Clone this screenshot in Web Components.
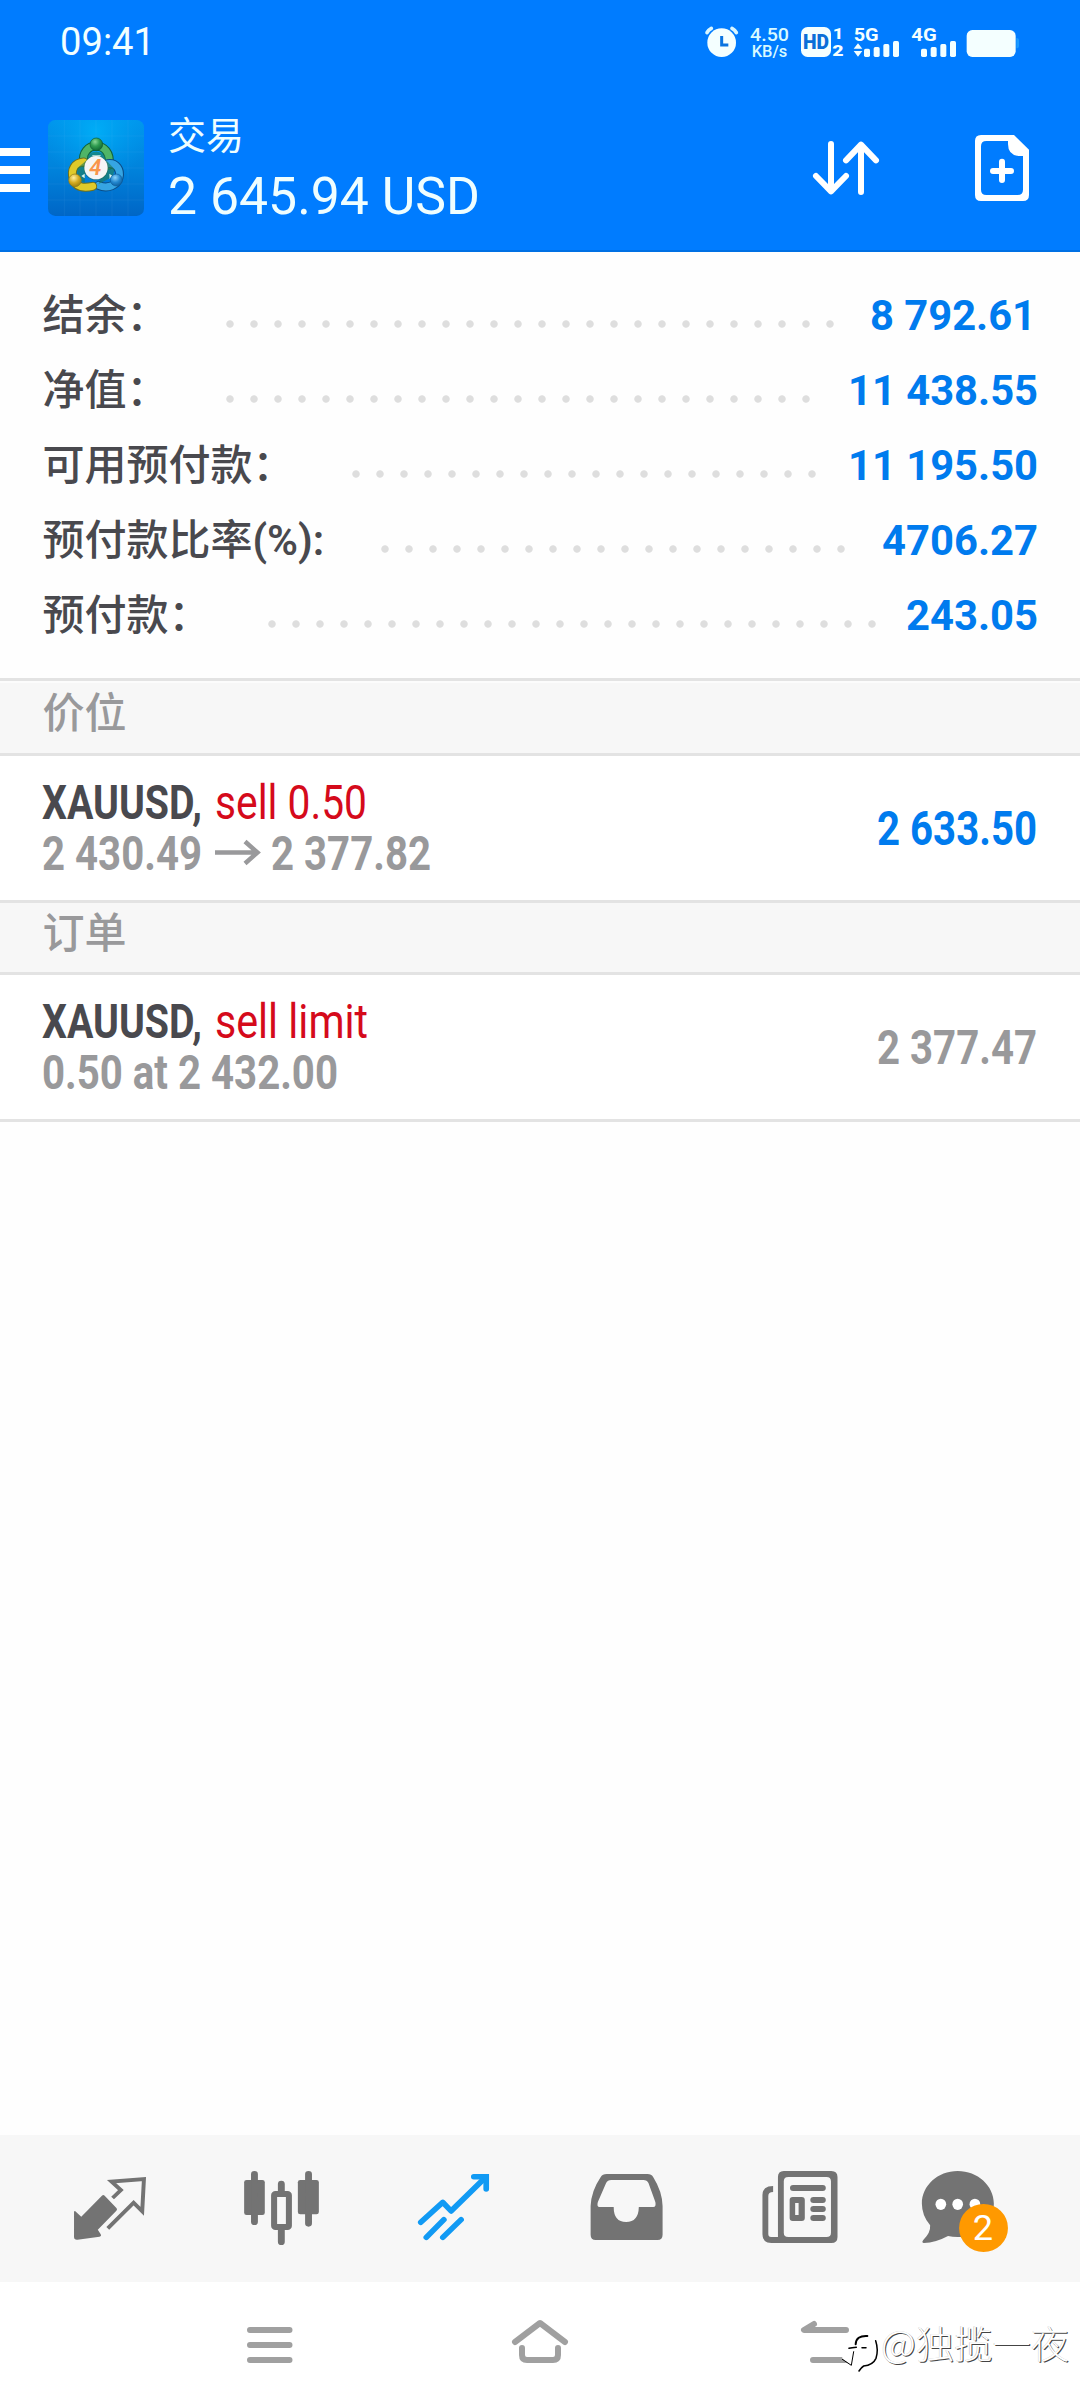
<!DOCTYPE html>
<html lang="zh-CN">
<head>
<meta charset="utf-8">
<title>交易</title>
<style>
html,body{margin:0;padding:0;background:#fefefe}
body{font-family:Roboto,"Noto Sans CJK SC",sans-serif;width:1080px}
</style>
</head>
<body>
<trade-app></trade-app>
<script>
// Text box of a known width: its glyph run is condensed or widened to fill it.
class FitText extends HTMLElement {
  constructor(){ super(); this.attachShadow({mode:'open'}).innerHTML =
    `<style>:host{display:block;flex:none;white-space:pre}span{display:inline-block;transform-origin:0 50%;white-space:pre}</style><span><slot></slot></span>`; }
  connectedCallback(){ this.fit(); document.fonts.ready.then(()=>this.fit()); }
  fit(){
    const w=+this.getAttribute('w'), s=this.shadowRoot.querySelector('span');
    this.style.width=w+'px';
    if(s.offsetWidth){ s.style.transform='none'; s.style.transform=`scaleX(${w/s.getBoundingClientRect().width})`; }
  }
}
const define=(name,html)=>customElements.define(name,class extends HTMLElement{
  constructor(){ super(); this.attachShadow({mode:'open'}).innerHTML=typeof html==='function'?html(this):html; }
});
customElements.define('fit-text',FitText);

define('status-bar',`<style>
:host{display:flex;height:88px;box-sizing:border-box;padding:20px 60px 0 60px;justify-content:space-between;color:#f2ffff}
.t{font-size:38.5px;line-height:44px}svg{display:block}
</style>
<fit-text class="t" w="95">09:41</fit-text>
<svg width="320" height="44" viewBox="120 60 960 132" fill="#f4ffff" font-family="Roboto">
<circle cx="185" cy="128" r="43"/><path d="M141 98q4-8 13-13M229 98q-4-8-13-13" fill="none" stroke="#d8f6ff" stroke-width="11" stroke-linecap="round"/>
<path d="M185 108v27h20" fill="none" stroke="#0a74e0" stroke-width="9"/>
<text x="270" y="123" font-size="54" font-weight="500" textLength="117" lengthAdjust="spacingAndGlyphs" fill="#d8faff">4.50</text>
<text x="275" y="171" font-size="47" font-weight="500" textLength="107" lengthAdjust="spacingAndGlyphs" fill="#d8faff">KB/s</text>
<rect x="423" y="81" width="90" height="90" rx="20"/>
<text x="429" y="147" font-size="58" font-weight="900" textLength="78" lengthAdjust="spacingAndGlyphs" fill="#0a6fd8">HD</text>
<text x="518" y="116" font-size="46" font-weight="800" textLength="32" lengthAdjust="spacingAndGlyphs">1</text>
<text x="517" y="168" font-size="46" font-weight="900" textLength="34" lengthAdjust="spacingAndGlyphs">2</text>
<text x="581" y="124" font-size="57" font-weight="700" textLength="75" lengthAdjust="spacingAndGlyphs">5G</text>
<path d="M581 146l13-16 13 16zM581 153l13 17 13-17z"/>
<rect x="612" y="146" width="18" height="25" rx="5"/><rect x="641" y="141" width="18" height="30" rx="5"/><rect x="670" y="132" width="18" height="39" rx="5"/><rect x="699" y="123" width="18" height="48" rx="5"/>
<text x="754" y="124" font-size="57" font-weight="700" textLength="76" lengthAdjust="spacingAndGlyphs">4G</text>
<rect x="783" y="146" width="18" height="25" rx="5"/><rect x="812" y="141" width="18" height="30" rx="5"/><rect x="841" y="132" width="18" height="39" rx="5"/><rect x="870" y="123" width="18" height="48" rx="5"/>
<rect x="920" y="90" width="147" height="81" rx="17"/><path d="M1069 114q8 0 8 7v17q0 7-8 7z" fill="#1a9aff"/>
</svg>`);

define('app-logo',`<style>:host{display:block;width:96px;height:96px;flex:none}svg{display:block}</style>
<svg width="96" height="96" viewBox="24 30 288 288">
<defs>
<linearGradient id="b" x1="0" y1="0" x2="0" y2="1"><stop offset="0" stop-color="#0096ec"/><stop offset=".5" stop-color="#0083dc"/><stop offset="1" stop-color="#0066c6"/></linearGradient>
<radialGradient id="h" cx=".5" cy=".12" r=".55"><stop offset="0" stop-color="#00b4fa" stop-opacity=".8"/><stop offset="1" stop-color="#00a0f0" stop-opacity="0"/></radialGradient>
<radialGradient id="g" cx=".4" cy=".3" r=".7"><stop offset="0" stop-color="#8ad896"/><stop offset=".5" stop-color="#2f9c50"/><stop offset="1" stop-color="#126a35"/></radialGradient>
<radialGradient id="y" cx=".4" cy=".3" r=".8"><stop offset="0" stop-color="#fff0a0"/><stop offset=".5" stop-color="#d3ab20"/><stop offset="1" stop-color="#8c7412"/></radialGradient>
<radialGradient id="u" cx=".4" cy=".3" r=".8"><stop offset="0" stop-color="#8bd2fa"/><stop offset=".5" stop-color="#2388d0"/><stop offset="1" stop-color="#0a5796"/></radialGradient>
</defs>
<rect x="24" y="30" width="288" height="288" rx="22" fill="url(#b)"/><rect x="24" y="30" width="288" height="288" rx="22" fill="url(#h)"/>
<path d="M73 30v288M120 30v288M168 30v288M216 30v288M264 30v288M24 78h288M24 126h288M24 174h288M24 222h288M24 270h288" stroke="#8fd8ff" stroke-opacity=".11" stroke-width="2" fill="none"/>
<g stroke-linecap="round" fill="none">
<path d="M131 158C126 128 145 108 168 108S213 128 207 165" stroke="#11633a" stroke-width="27"/><path d="M131 158C126 128 145 108 168 108S213 128 207 165" stroke="#4fb567" stroke-width="21"/>
<path d="M203 161C229 157 243 180 237 203S203 238 176 226" stroke="#0a4d88" stroke-width="27"/><path d="M203 161C229 157 243 180 237 203S203 238 176 226" stroke="#36a5e3" stroke-width="21"/>
<path d="M131 156C104 158 91 179 100 207S134 234 158 229" stroke="#6f701c" stroke-width="27"/><path d="M131 156C104 158 91 179 100 207S134 234 158 229" stroke="#e0ca2a" stroke-width="21"/>
</g>
<path d="M140 138q28-26 56 0l-8 20h-40zM112 174l26-22-4 66-22-10zM200 152l24 26-6 22-42 22z" fill="#1f7c52" opacity=".6"/>
<path d="M156 136h27l-8 9h-12zM124 198l10-7v14zM208 191l10 7-9 9z" fill="#d9f4f0"/>
<circle cx="169" cy="103" r="19" fill="url(#g)" stroke="#0d5a34" stroke-width="2"/>
<circle cx="105" cy="211" r="19" fill="url(#y)" stroke="#8b7a1b" stroke-width="2"/>
<circle cx="229" cy="210" r="18" fill="url(#u)" stroke="#0d5c9b" stroke-width="2"/>
<circle cx="168" cy="174" r="37" fill="#2b6d55" opacity=".6"/><circle cx="168" cy="173" r="35" fill="#f5f5f5"/>
<text x="166" y="196" font-family="Roboto" font-weight="600" font-style="italic" font-size="66" text-anchor="middle" fill="#f9954a">4</text>
</svg>`);

define('app-header',`<style>
:host{display:flex;height:164px;box-sizing:border-box;color:#effeff;align-items:flex-start;box-shadow:inset 0 -2px #0070e4}
svg{display:block;flex:none}
app-logo{margin:32px 24px 0 18px}
.burger{margin-top:60px}
.title{padding-top:20px;flex:1}
.c{font:400 38px/50px "Noto Sans CJK SC",sans-serif;margin-bottom:9px}
.a{font-size:51px;line-height:60px}
.swap{margin:47px 83px 0 0}.doc{margin:47px 46px 0 0}
</style>
<svg class="burger" width="30" height="44" fill="#fff"><path d="M0 0h30v8H0zM0 18h30v8H0zM0 36h30v8H0z"/></svg>
<app-logo></app-logo>
<div class="title"><div class="c">交易</div><fit-text class="a" w="312">2 645.94 USD</fit-text></div>
<svg class="swap" width="82" height="66" viewBox="435 405 246 198" fill="none" stroke="#fff" stroke-width="18" stroke-linecap="round" stroke-linejoin="round"><path d="M513 432v142M468 528l45 46 45-46M603 576V434M558 481l45-47 45 47"/></svg>
<svg class="doc" width="64" height="66" viewBox="930 405 192 198" fill="#fff"><path fill-rule="evenodd" d="M963 405h99l45 44v136q0 18-18 18H963q-18 0-18-18V423q0-18 18-18zM979 423q-16 0-16 16v130q0 16 16 16h94q16 0 16-16V468h-13q-32-3-32-36v-9z"/><path d="M1026 485v55M999 513h54" stroke="#fff" stroke-width="18" stroke-linecap="round"/></svg>`);

define('account-row',el=>`<style>
:host{display:flex;height:75px;padding:0 42.500px 0 42.500px;align-items:baseline}
.l{font:500 42px/60px "Noto Sans CJK SC",sans-serif;color:#49494e;white-space:nowrap;flex:none}
.d{align-self:flex-start;flex:none;height:8px;margin:37.500px 0 0 ${el.getAttribute('gap')||49}px;width:${el.getAttribute('dots')*24}px;background:radial-gradient(circle,#dedede 3.3px,transparent 4.1px) 0 0/24px 8px}
fit-text{margin-left:auto;margin-right:${el.getAttribute('inset')||0}px;font-weight:700;font-size:42px;line-height:60px;color:#007bee}
</style><div class="l"><slot></slot></div><div class="d"></div><fit-text w="${el.getAttribute('w')}">${el.getAttribute('value')}</fit-text>`);

define('section-title',`<style>
:host{display:block;box-sizing:border-box;background:#f7f7f7;border-bottom:3px solid #e3e3e3;padding-left:42.500px;font:500 42px/54px "Noto Sans CJK SC",sans-serif;color:#99999b}
</style><slot></slot>`);

define('deal-row',`<style>
:host{display:flex;height:147px;box-sizing:border-box;border-bottom:3px solid #e3e3e3;padding:0 43px 0 42px;align-items:center;justify-content:space-between;background:#fff;font-size:48px;line-height:51px;font-weight:700}
.line{display:flex}
</style><div><div class="line"><slot name="top"></slot></div><div class="line"><slot name="bottom"></slot></div></div><slot name="value"></slot>`);

// Tab artwork lives on one wide canvas; each tab shows its own 499.5-unit slice.
const tab=(x,body)=>`<svg width="172" height="147" viewBox="${x} 45 499.5 441" preserveAspectRatio="none" fill="#737373">${body}</svg>`;
define('tab-bar',`<style>
:host{display:flex;height:147px;background:#f7f7f7;padding:0 24px}
svg{display:block;flex:none;overflow:visible}
</style>`+
tab(69.7,`<path d="M296 227q4-4 8 0l34 37q4 4 0 8l-54 57 8 13q4 7-3 8l-64 9q-10 1-10-8v-76q2-4 6 1l15 14z"/><path d="M327 234l24-24-27-25 94-8-5 97-25-26-75 77" fill="none" stroke="#737373" stroke-width="11.5"/>`)+
tab(569.2,`<rect x="709" y="180" width="60" height="105" rx="7"/><rect x="865" y="180" width="61" height="103" rx="7"/><path d="M739 163v142M896 163v147M817 192v28M817 325v40" stroke="#737373" stroke-width="20" stroke-linecap="round"/><rect x="796" y="222" width="43" height="99" rx="4" fill="none" stroke="#737373" stroke-width="17.5"/>`)+
tab(1068.7,`<g fill="none" stroke="#119af4" stroke-width="16.5" stroke-linejoin="round"><path d="M1222 307l64-60 24 26 98-99" stroke-linecap="round"/><path d="M1376 170h36v37" stroke-linecap="round" stroke-linejoin="miter"/><path d="M1238 352l51-53M1286 352l53-53" stroke-linecap="round"/></g><path d="M1390 162h29v29z" fill="#119af4"/>`)+
tab(0,`<path fill-rule="evenodd" d="M194 162h118q12 0 17 10 26 43 27 86v86q0 16-15 16H162q-15 0-15-16v-86q2-45 29-86 5-10 18-10zM207 180q-11 0-15 9l-24 57q-4 15 5 15h41q0 45 36 45t37-45h42q9 0 6-15l-20-57q-4-9-15-9z"/>`)+
tab(499.5,`<path fill-rule="evenodd" d="M708 153h138q18 0 18 18v180q0 18-18 18H672q-26 0-26-26V225q0-27 31-27v18q-14 0-14 12v114q0 9 8 9h20V171q0-18 17-18zm13 18q-13 0-13 13v154q0 13 13 13h111q13 0 13-13V184q0-13-13-13z"/><path d="M735 204h86M794 240h27M794 267h27M794 294h27" stroke="#737373" stroke-width="18" stroke-linecap="round"/><path fill-rule="evenodd" d="M734 231h26q9 0 9 9v54q0 9-9 9h-26q-9 0-9-9v-54q0-9 9-9zm7 18v36h10v-36z"/>`)+
tab(999,`<path d="M1213 153c58 0 105 44 105 98s-43 100-105 100q-16 0-28-3-36 20-70 21-8-1-2-9 22-22 20-44-24-30-24-65c0-54 46-98 104-98z"/><ellipse cx="1164" cy="253" rx="15.5" ry="17" fill="#fff"/><ellipse cx="1213" cy="253" rx="15.5" ry="17" fill="#fff"/><ellipse cx="1263" cy="253" rx="15.5" ry="17" fill="#fff"/><ellipse cx="1288" cy="324" rx="71" ry="72" fill="#ff9900"/><text x="1286" y="360" font-family="Roboto" font-size="105" text-anchor="middle" fill="#fff">2</text>`));

define('nav-bar',`<style>
:host{display:flex;height:126px;justify-content:center;background:#fff;position:relative}
svg{display:block;fill:none;stroke:#a0a0a0;stroke-width:6;stroke-linecap:round;stroke-linejoin:round}
.mark{position:absolute;right:11px;top:35px;display:flex;height:60px;align-items:flex-start}
.mark svg{stroke:#000}
.mark fit-text{font:300 38px/50px "Noto Sans CJK SC",sans-serif;color:#fff;text-shadow:1px 1px .5px #444,-.3px -.3px .4px #bbb}
</style>
<svg width="270" height="126" viewBox="135 2282 270 126"><path d="M250 2330h39.500M250 2345h39.500M250 2360h39.500"/></svg>
<svg width="270" height="126" viewBox="405 2282 270 126"><path d="M515 2342l25-19 25 19M522 2348v7q0 5 5 5h26q5 0 5-5v-7"/></svg>
<svg width="270" height="126" viewBox="675 2282 270 126"><path d="M814 2324l-10 6h42M813 2360h42"/></svg>
<div class="mark">
<svg width="43" height="60" viewBox="140 21 129 180"><path d="M188 40L152 145l28 20 24 22 56-30V80L220 52z" fill="#fff" stroke="none"/><path d="M193 103q1-27 35-25" stroke-width="6"/><path d="M173 115q8-2 22-3M212 113h12" stroke-width="4.500"/><path d="M187 125l-7 41-27-18" stroke-width="3"/><path d="M253 92q9 28 1 53-9 20-37 23-8 5-14 15" stroke-width="4.500"/></svg>
<fit-text w="188">@独揽一夜</fit-text></div>`);

define('trade-app',`<style>
:host{display:flex;flex-direction:column;width:1080px;height:2408px;background:#fefefe}
.top{background:#007cff}
.acct{padding:30px 0 21px;border-bottom:3px solid #e3e3e3;background:#fefefe}
.first{border-top:2px solid #fcfcfc;height:75px}.second{height:72px}
.sym{color:#49494e;margin-right:13px}.sell{color:#d50a1b;font-weight:400}.g{color:#99999b}.b{color:#007bee}
.arr{display:block;margin:0 10.500px 0 12.500px;flex:none}
.fill{flex:1}
</style>
<div class="top"><status-bar></status-bar><app-header></app-header></div>
<div class="acct">
<account-row dots="26" gap="49" inset="1.5" value="8 792.61" w="166">结余：</account-row>
<account-row dots="25" gap="49" value="11 438.55" w="190">净值：</account-row>
<account-row dots="20" gap="49" value="11 195.50" w="190">可用预付款：</account-row>
<account-row dots="20" gap="49" value="4706.27" w="156">预付款比率<span style="font-family:Roboto;font-weight:600">(%):</span></account-row>
<account-row dots="26" gap="49" value="243.05" w="132">预付款：</account-row>
</div>
<section-title class="first">价位</section-title>
<deal-row><fit-text slot="top" class="sym" w="160">XAUUSD,</fit-text><fit-text slot="top" class="sell" w="152">sell 0.50</fit-text>
<fit-text slot="bottom" class="g" w="160">2 430.49</fit-text><svg slot="bottom" class="arr" width="46" height="51" fill="none" stroke="#99999b" stroke-width="4.500"><path d="M0 24.500h43M30 13.500l12.500 11-12.500 11"/></svg><fit-text slot="bottom" class="g" w="160">2 377.82</fit-text>
<fit-text slot="value" class="b" w="160">2 633.50</fit-text></deal-row>
<section-title class="second">订单</section-title>
<deal-row><fit-text slot="top" class="sym" w="160">XAUUSD,</fit-text><fit-text slot="top" class="sell" w="153">sell limit</fit-text>
<fit-text slot="bottom" class="g" w="296">0.50 at 2 432.00</fit-text>
<fit-text slot="value" class="g" w="160">2 377.47</fit-text></deal-row>
<div class="fill"></div>
<tab-bar></tab-bar>
<nav-bar></nav-bar>`);
</script>
</body>
</html>
